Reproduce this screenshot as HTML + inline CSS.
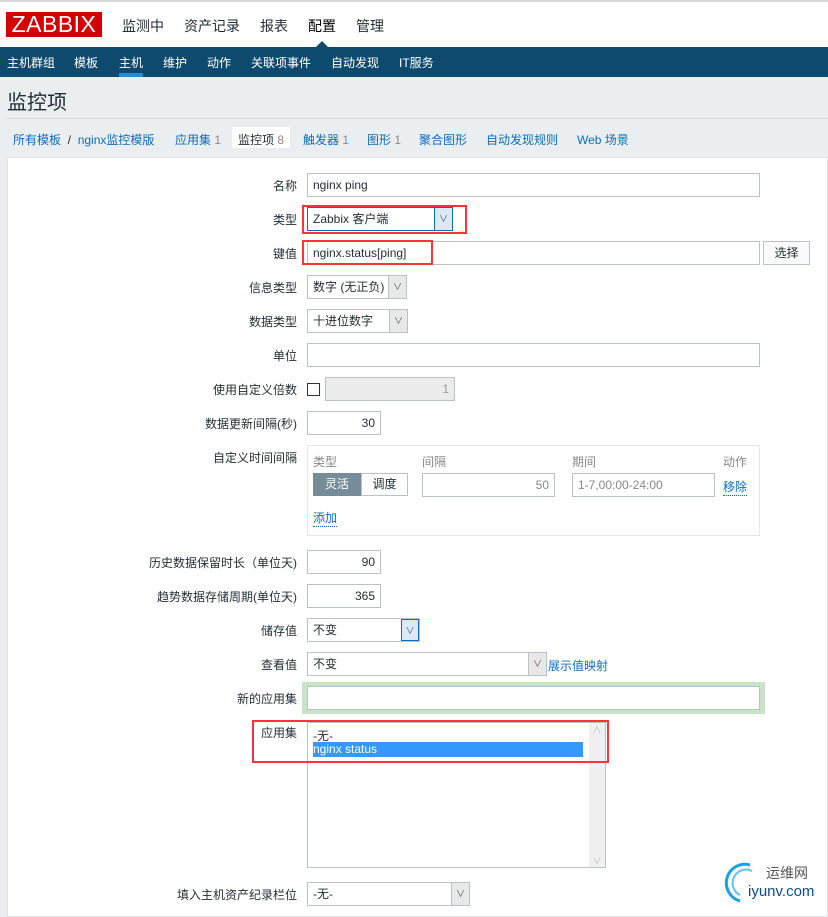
<!DOCTYPE html><html><head><meta charset="utf-8"><style>
*{box-sizing:border-box;margin:0;padding:0}
body{width:828px;height:908px;overflow:hidden;background:#ebeef0;font-family:"Liberation Sans","Noto Sans CJK SC",sans-serif;font-size:12px;color:#1f2c33;position:relative}
.a{position:absolute}
.top{left:0;top:0;width:828px;height:47px;background:#fff;border-top:2px solid #d8d8d8}
.logo{left:6px;top:12px;width:96px;height:25px;background:#d40000;color:#fff;font-size:23px;line-height:25px;text-align:center;letter-spacing:0.5px}
.mm{top:16px;font-size:14px;color:#1f2c33}
.nav{left:0;top:47px;width:828px;height:30px;background:#0e4a6e}
.nav span{position:absolute;top:7px;color:#fff;font-size:12px}
.lbl{right:531px;text-align:right;font-size:12px;white-space:nowrap}
.in{background:#fff;border:1px solid #b8c2c8;height:24px;padding:0 5px;line-height:22px;font-size:12px}
.sel .ar{position:absolute;right:0;top:0;width:18px;height:22px;background:#e8e8e8;border-left:1px solid #b8c2c8;text-align:center;font-size:9px;line-height:22px;color:#555}
.red{border:2px solid #f33}
.lk{color:#0a6dbd}
.tab{top:131px;font-size:12px;color:#0a6dbd}
.tab i{font-style:normal;color:#888}
</style></head><body>
<div class="a top"></div>
<div class="a logo">ZABBIX</div>
<div class="a mm" style="left:122px">监测中</div>
<div class="a mm" style="left:184px">资产记录</div>
<div class="a mm" style="left:260px">报表</div>
<div class="a mm" style="left:308px;color:#000">配置</div>
<div class="a mm" style="left:356px">管理</div>
<div class="a" style="left:315px;top:41px;width:0;height:0;border-left:7px solid transparent;border-right:7px solid transparent;border-bottom:7px solid #0e4a6e"></div>
<div class="a nav">
<span style="left:7px">主机群组</span><span style="left:74px">模板</span><span style="left:119px">主机</span><span style="left:163px">维护</span><span style="left:207px">动作</span><span style="left:251px">关联项事件</span><span style="left:331px">自动发现</span><span style="left:399px">IT服务</span>
<div class="a" style="left:119px;top:26px;width:24px;height:4px;background:#1d8ed8"></div>
</div>
<div class="a" style="left:7px;top:86px;font-size:20px;color:#1f2c33">监控项</div>
<div class="a" style="left:7px;top:118px;width:821px;height:1px;background:#d5d9dc"></div>
<div class="a tab" style="left:13px">所有模板 <span style="color:#1f2c33">&nbsp;/&nbsp;</span> nginx监控模版</div>
<div class="a tab" style="left:175px">应用集 <i>1</i></div>
<div class="a" style="left:232px;top:127px;width:58px;height:21px;background:#fff"></div>
<div class="a tab" style="left:238px;color:#1f2c33">监控项 <i>8</i></div>
<div class="a tab" style="left:303px">触发器 <i>1</i></div>
<div class="a tab" style="left:367px">图形 <i>1</i></div>
<div class="a tab" style="left:419px">聚合图形</div>
<div class="a tab" style="left:486px">自动发现规则</div>
<div class="a tab" style="left:577px">Web 场景</div>
<div class="a" style="left:7px;top:157px;width:821px;height:760px;background:#fff;border:1px solid #dfe3e5"></div>

<div class="a lbl" style="top:177px">名称</div>
<div class="a in" style="left:307px;top:173px;width:453px">nginx ping</div>
<div class="a lbl" style="top:211px">类型</div>
<div class="a in sel" style="left:307px;top:207px;width:146px;border-color:#0a6dbd">Zabbix 客户端<div class="ar" style="background:#dbe9f6;border-color:#0a6dbd">∨</div></div>
<div class="a red" style="left:302px;top:205px;width:165px;height:29px"></div>
<div class="a lbl" style="top:245px">键值</div>
<div class="a in" style="left:307px;top:241px;width:453px">nginx.status[ping]</div>
<div class="a in" style="left:763px;top:241px;width:47px;text-align:center;background:#fafafa">选择</div>
<div class="a red" style="left:302px;top:240px;width:131px;height:25px"></div>
<div class="a lbl" style="top:279px">信息类型</div>
<div class="a in sel" style="left:307px;top:275px;width:100px">数字 (无正负)<div class="ar">∨</div></div>
<div class="a lbl" style="top:313px">数据类型</div>
<div class="a in sel" style="left:307px;top:309px;width:101px">十进位数字<div class="ar">∨</div></div>
<div class="a lbl" style="top:347px">单位</div>
<div class="a in" style="left:307px;top:343px;width:453px"></div>
<div class="a lbl" style="top:381px">使用自定义倍数</div>
<div class="a" style="left:307px;top:383px;width:13px;height:13px;border:1px solid #333"></div>
<div class="a in" style="left:325px;top:377px;width:130px;background:#ebebeb;text-align:right;color:#999">1</div>
<div class="a lbl" style="top:415px">数据更新间隔(秒)</div>
<div class="a in" style="left:307px;top:411px;width:74px;text-align:right">30</div>
<div class="a lbl" style="top:449px">自定义时间间隔</div>
<div class="a" style="left:307px;top:445px;width:453px;height:91px;border:1px solid #e5e8ea"></div>
<div class="a" style="left:313px;top:453px;color:#888">类型</div>
<div class="a" style="left:422px;top:453px;color:#888">间隔</div>
<div class="a" style="left:572px;top:453px;color:#888">期间</div>
<div class="a" style="left:723px;top:453px;color:#888">动作</div>
<div class="a" style="left:313px;top:473px;width:48px;height:23px;background:#768d99;color:#fff;text-align:center;line-height:23px">灵活</div>
<div class="a" style="left:361px;top:473px;width:47px;height:23px;border:1px solid #b8c2c8;text-align:center;line-height:21px">调度</div>
<div class="a in" style="left:422px;top:473px;width:133px;text-align:right;color:#888">50</div>
<div class="a in" style="left:572px;top:473px;width:143px;color:#888">1-7,00:00-24:00</div>
<div class="a lk" style="left:723px;top:478px;border-bottom:1px dotted #0a6dbd">移除</div>
<div class="a lk" style="left:313px;top:509px;border-bottom:1px dotted #0a6dbd">添加</div>
<div class="a lbl" style="top:554px">历史数据保留时长（单位天)</div>
<div class="a in" style="left:307px;top:550px;width:74px;text-align:right">90</div>
<div class="a lbl" style="top:588px">趋势数据存储周期(单位天)</div>
<div class="a in" style="left:307px;top:584px;width:74px;text-align:right">365</div>
<div class="a lbl" style="top:622px">储存值</div>
<div class="a in sel" style="left:307px;top:618px;width:113px">不变<div class="ar" style="background:#dbe9f6;border:1px solid #0a6dbd">∨</div></div>
<div class="a lbl" style="top:656px">查看值</div>
<div class="a in sel" style="left:307px;top:652px;width:240px">不变<div class="ar">∨</div></div>
<div class="a lk" style="left:548px;top:657px">展示值映射</div>
<div class="a lbl" style="top:690px">新的应用集</div>
<div class="a" style="left:302px;top:682px;width:463px;height:32px;background:#c8e3c8"></div>
<div class="a in" style="left:307px;top:686px;width:453px"></div>
<div class="a lbl" style="top:724px">应用集</div>
<div class="a" style="left:307px;top:722px;width:299px;height:146px;background:#fff;border:1px solid #b8c2c8"></div>
<div class="a" style="left:589px;top:723px;width:16px;height:144px;background:#f0f0f0;color:#bbb;font-size:9px;text-align:center">∧<div style="position:absolute;bottom:0;width:16px">∨</div></div>
<div class="a" style="left:313px;top:727px">-无-</div>
<div class="a" style="left:313px;top:742px;width:270px;height:15px;background:#3399ff;color:#fff;line-height:15px">nginx status</div>
<div class="a red" style="left:252px;top:720px;width:357px;height:43px"></div>
<div class="a lbl" style="top:886px">填入主机资产纪录栏位</div>
<div class="a in sel" style="left:307px;top:882px;width:163px">-无-<div class="ar">∨</div></div>
<svg class="a" style="left:722px;top:857px" width="40" height="48"><path d="M28 8 A17 17 0 1 0 18 44" fill="none" stroke="#1aa0e0" stroke-width="3"/><path d="M30 14 A12 12 0 1 0 18 38" fill="none" stroke="#60c0f0" stroke-width="2"/></svg>
<div class="a" style="left:766px;top:863px;font-size:14px;color:#555">运维网</div>
<div class="a" style="left:748px;top:883px;font-size:15px;color:#0b4a8e">iyunv.com</div>
</body></html>
